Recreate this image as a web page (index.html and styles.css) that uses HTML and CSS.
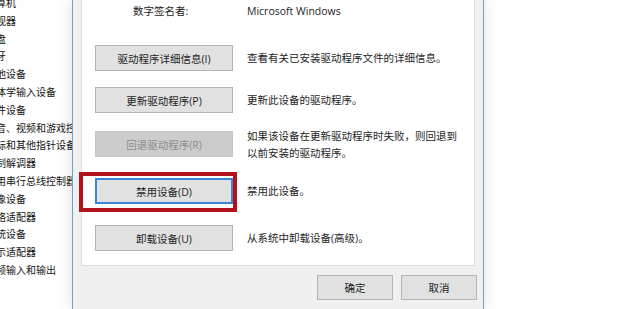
FILE: index.html
```html
<!DOCTYPE html>
<html>
<head>
    <title>设备属性 - 驱动程序</title>
    <link rel="stylesheet" href="styles.css">
</head>
<body>
    <div class="tree">
        <div class="tree-list">
            <div>计算机</div>
            <div>监视器</div>
            <div>键盘</div>
            <div>蓝牙</div>
            <div>其他设备</div>
            <div>人体学输入设备</div>
            <div>软件设备</div>
            <div>声音、视频和游戏控制器</div>
            <div>鼠标和其他指针设备</div>
            <div>调制解调器</div>
            <div>通用串行总线控制器</div>
            <div>图像设备</div>
            <div>网络适配器</div>
            <div>系统设备</div>
            <div>显示适配器</div>
            <div>音频输入和输出</div>
        </div>
    </div>

    <div class="dialog">
        <div class="panel">
            <div class="info-row">
                <span class="info-label">数字签名者:</span>
                <span class="info-value">Microsoft Windows</span>
            </div>

            <div class="actions">
                <button class="btn">驱动程序详细信息(I)</button>
                <div class="desc">查看有关已安装驱动程序文件的详细信息。</div>

                <button class="btn">更新驱动程序(P)</button>
                <div class="desc">更新此设备的驱动程序。</div>

                <button class="btn" disabled>回退驱动程序(R)</button>
                <div class="desc desc-multi">如果该设备在更新驱动程序时失败，则回退到<br>以前安装的驱动程序。</div>

                <button class="btn btn-focus">禁用设备(D)</button>
                <div class="desc">禁用此设备。</div>

                <button class="btn">卸载设备(U)</button>
                <div class="desc">从系统中卸载设备(高级)。</div>
            </div>

            <!-- annotation box drawn over the disable button -->
            <div class="highlight"></div>
        </div>

        <div class="footer">
            <button class="btn btn-small">确定</button>
            <button class="btn btn-small">取消</button>
        </div>
    </div>

    <div class="backdrop"></div>
</body>
</html>
```

FILE: styles.css
```css
body {
    margin: 0;
    width: 620px;
    height: 309px;
    overflow: hidden;
    display: flex;
    background: #ffffff;
    font-family: "Open Sans", "Noto Sans CJK SC", sans-serif;
    color: #1e1e1e;
}
.tree {
    width: 72px;
    flex-shrink: 0;
    overflow: hidden;
    background: #ffffff;
}
.tree-list {
    margin-left: -14px;
    margin-top: -5px;
    font-size: 10px;
    line-height: 17.8px;
    white-space: nowrap;
    color: #141414;
}
.dialog {
    position: relative;
    width: 394px;
    flex-shrink: 0;
    padding: 0 8px;
    background: #f0f0f0;
    border-left: 1px solid #6d9fd3;
    border-right: 1px solid #6d9fd3;
    box-shadow: 0 0 14px rgba(0, 0, 0, 0.13);
    display: flex;
    flex-direction: column;
}
.panel {
    position: relative;
    height: 265px;
    background: #ffffff;
    border: 1px solid #dcdcdc;
    border-top: none;
    font-size: 10.5px;
}
.info-row {
    display: flex;
    margin-top: 2px;
    padding-left: 51px;
    line-height: 18px;
}
.info-label {
    width: 114px;
}
.actions {
    display: grid;
    grid-template-columns: 138px auto;
    grid-template-rows: 42px 44px 47px 47px 26px;
    column-gap: 14px;
    align-items: start;
    margin-top: 25px;
    padding-left: 13px;
}
.btn {
    height: 26px;
    padding: 0;
    background: #e1e1e1;
    border: 1px solid #b4b4b4;
    font-family: "Open Sans", "Noto Sans CJK SC", sans-serif;
    font-size: 10.5px;
    color: #1e1e1e;
}
.btn:disabled {
    background: #cccccc;
    border-color: #c4c4c4;
    color: #8c8c8c;
}
.btn-focus {
    border: 2px solid #3b87d7;
}
.desc {
    line-height: 26px;
    white-space: nowrap;
}
.desc-multi {
    line-height: 17px;
    margin-top: -3px;
}
.highlight {
    position: absolute;
    left: -3px;
    top: 172px;
    width: 150px;
    height: 32px;
    border: 4px solid #b3121a;
}
.footer {
    display: flex;
    justify-content: flex-end;
    gap: 8px;
    padding-top: 9px;
    margin-right: -2px;
}
.btn-small {
    width: 76px;
    height: 25px;
}
.backdrop {
    flex: 1;
    background: #ffffff;
}
```
